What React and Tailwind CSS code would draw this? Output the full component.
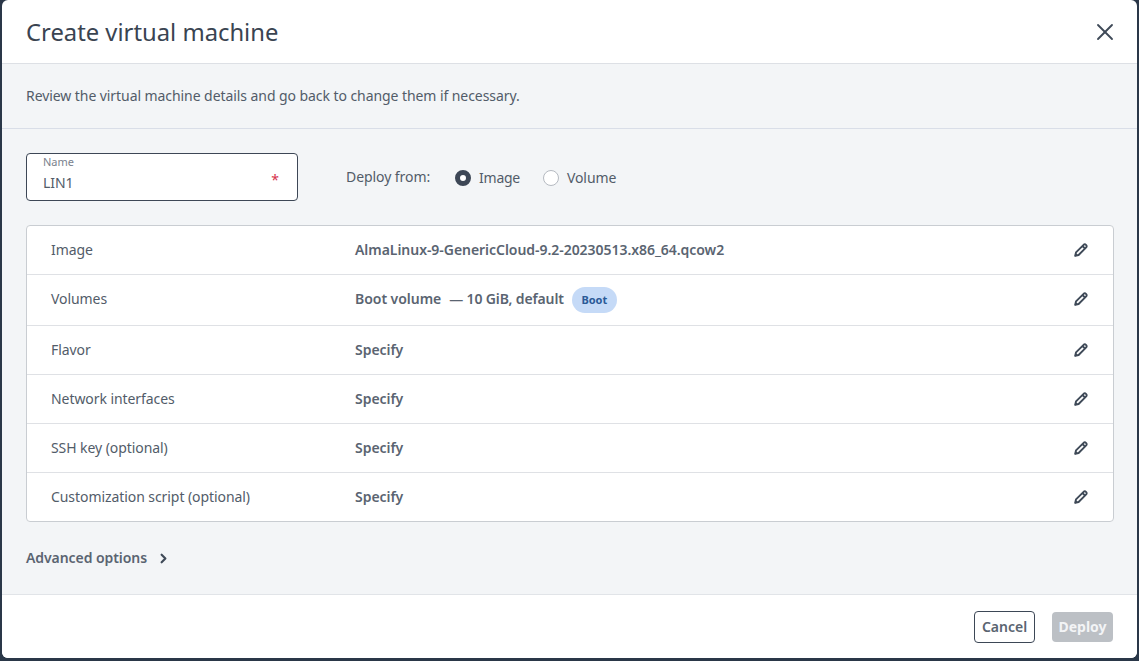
import React from 'react';
import { X, ChevronRight } from 'lucide-react';

const rows = [
  { label: 'Image', value: 'AlmaLinux-9-GenericCloud-9.2-20230513.x86_64.qcow2', h: 'h-[49px]' },
  { label: 'Volumes', boot: true, h: 'h-[51px] pb-[2px]' },
  { label: 'Flavor', value: 'Specify', h: 'h-[49px]' },
  { label: 'Network interfaces', value: 'Specify', h: 'h-[49px]' },
  { label: 'SSH key (optional)', value: 'Specify', h: 'h-[49px]' },
  { label: 'Customization script (optional)', value: 'Specify', h: 'h-[48px]' },
];

const EditIcon = () => (
  <svg width="16" height="16" viewBox="0 0 16 16" fill="none" stroke="currentColor" strokeWidth="1.9" strokeLinejoin="round" className="mr-[24px] text-[#3f4a58]">
    <path d="M2.2 13.8l.8-3.4 7.6-7.6a1.6 1.6 0 0 1 2.3 0l.3.3a1.6 1.6 0 0 1 0 2.3l-7.6 7.6z" />
    <path d="M9.4 4l2.7 2.7" />
    <path d="M1.6 14.4l1-3.6 2.6 2.6z" fill="currentColor" stroke="none" />
  </svg>
);

const Row = ({ row, last }) => (
  <div className={`${row.h} flex items-center ${last ? '' : 'border-b border-[#dfe1e5]'}`}>
    <div className="w-[328px] pl-6 text-sm tracking-[-0.005em] text-[#525c69]">{row.label}</div>
    <div className="flex-1 flex items-center pb-[1px] text-sm font-semibold tracking-[-0.003em] text-[#5a6471]">
      {row.boot ? (
        <>
          <span>Boot volume</span>
          <span className="ml-[8px] tracking-[-0.01em]">— 10 GiB, default</span>
          <span className="ml-[8px] mt-[2px] h-[26px] w-[45px] rounded-full bg-[#c5daf7] flex items-center justify-center text-[11px] font-bold text-[#2b5a97]">Boot</span>
        </>
      ) : row.value}
    </div>
    <EditIcon />
  </div>
);

export default function App() {
  return (
    <div className="h-[661px] w-[1139px] overflow-hidden bg-[#2a3748] pl-[2px] pr-[2px] pb-[3px] font-['Noto_Sans',sans-serif]">
      <div className="h-full flex flex-col rounded-md overflow-hidden bg-white">
        <header className="h-[64px] shrink-0 flex items-center justify-between pl-6 pr-[18px] border-b border-[#dde0e5]">
          <h1 className="pt-[2px] text-[23.8px] text-[#3a4451]">Create virtual machine</h1>
          <X size={28} strokeWidth={1.6} className="text-[#3f4a58]" />
        </header>

        <div className="h-[65px] shrink-0 flex items-center pl-6 bg-[#f3f5f7] border-b border-[#d9dee8] text-sm tracking-[-0.005em] text-[#525c69]">
          Review the virtual machine details and go back to change them if necessary.
        </div>

        <main className="flex-1 bg-[#f3f5f7] pl-6 pr-[23px] pt-6 border-b border-[#e1e4e8]">
          <div className="flex items-center">
            <div className="relative h-12 w-[272px] rounded border border-[#3d4756] bg-white pl-4">
              <div className="text-[11px] leading-4 text-[#7a828d]">Name</div>
              <div className="pt-[3px] text-sm leading-5 tracking-[-0.005em] text-[#525c69]">LIN1</div>
              <span className="absolute right-[18px] top-[16px] text-sm text-[#d6334c]">*</span>
            </div>
            <span className="ml-12 text-sm tracking-[-0.005em] text-[#525c69]">Deploy from:</span>
            <label className="ml-[25px] flex items-center pt-[1px] text-sm tracking-[-0.02em] text-[#525c69]">
              <span className="h-4 w-4 rounded-full border-[5px] border-[#3d4756] bg-white" />
              <span className="ml-2">Image</span>
            </label>
            <label className="ml-[23px] flex items-center pt-[1px] text-sm tracking-[-0.005em] text-[#525c69]">
              <span className="h-4 w-4 rounded-full border border-[#b5bac1] bg-white" />
              <span className="ml-2">Volume</span>
            </label>
          </div>

          <div className="mt-6 rounded border border-[#c9cdd2] bg-white">
            {rows.map((row, i) => (
              <Row key={row.label} row={row} last={i === rows.length - 1} />
            ))}
          </div>

          <div className="mt-[26px] flex items-center text-sm font-semibold tracking-[-0.005em] text-[#5a6471]">
            Advanced options
            <ChevronRight size={15} strokeWidth={3.5} className="ml-[9px] text-[#3f4a58]" />
          </div>
        </main>

        <footer className="h-[63px] shrink-0 flex items-center justify-end gap-[17px] pr-6 bg-white">
          <button className="h-8 w-[61px] rounded border border-[#3d4756] bg-white text-sm font-semibold text-[#5a6471]">Cancel</button>
          <button className="h-[30px] w-[61px] rounded-sm bg-[#bcc0c5] text-sm font-bold text-[#f3f4f6]">Deploy</button>
        </footer>
      </div>
    </div>
  );
}
